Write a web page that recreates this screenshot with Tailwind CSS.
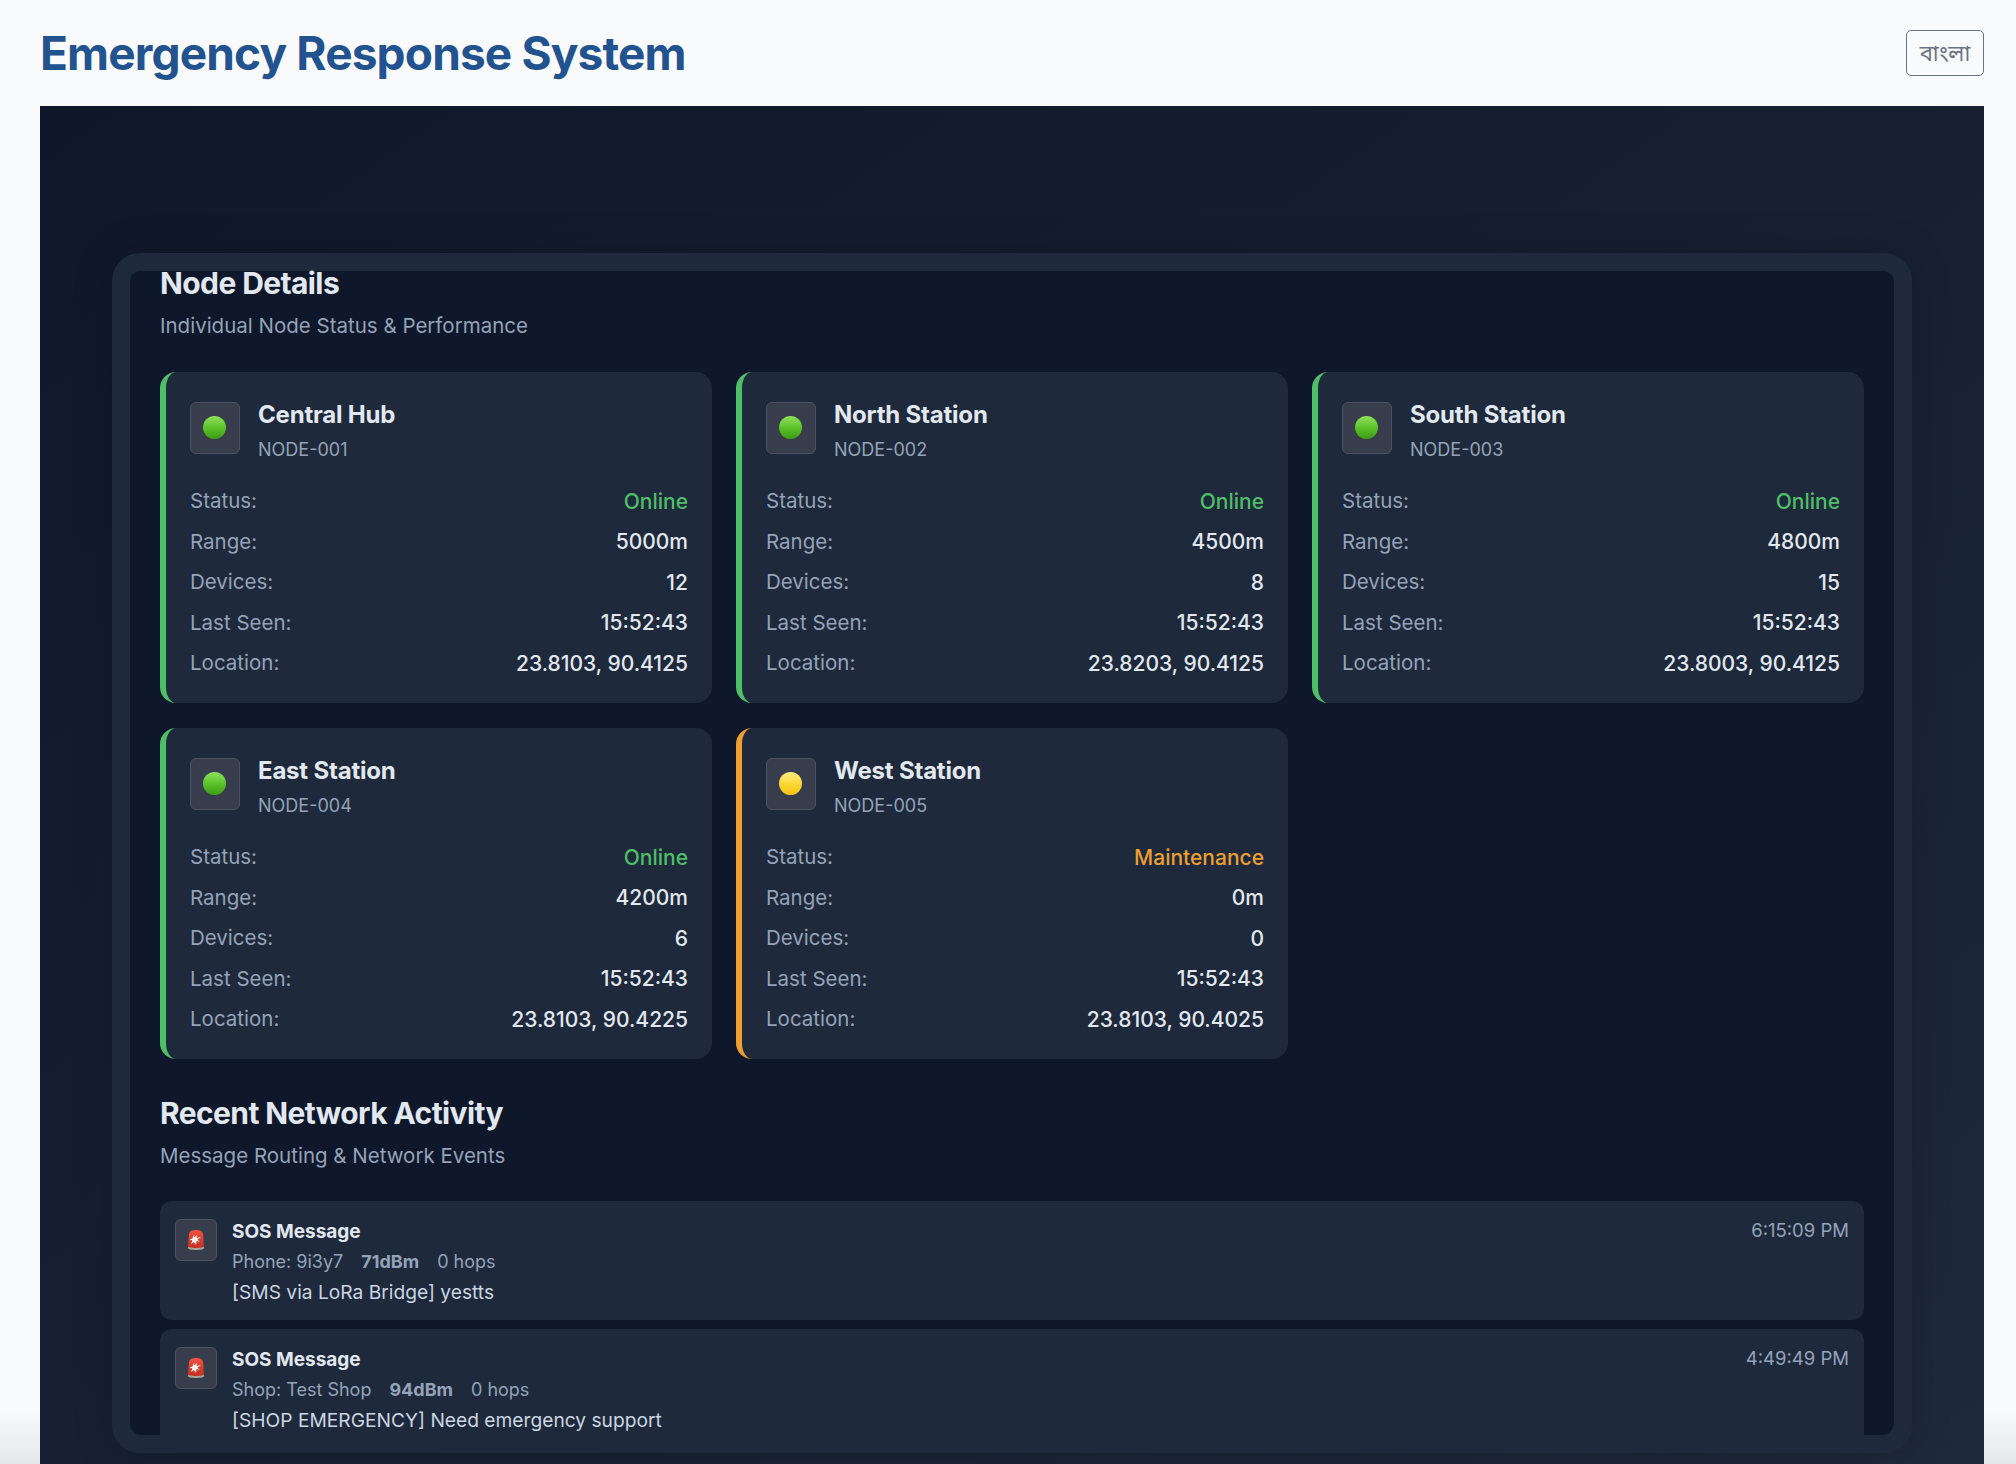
<!doctype html>
<html lang="en">
    <head>
        <meta charset="UTF-8" />
        <meta name="viewport" content="width=device-width, initial-scale=1.0" />
        <title>Emergency Response System</title>
        <script src="https://cdn.jsdelivr.net/npm/@tailwindcss/browser@4"></script>
    </head>
    <body class="relative h-[1464px] overflow-hidden bg-[#f8fafc] font-['Inter','Noto_Sans','Noto_Sans_Bengali',sans-serif] antialiased">
        <!-- Faint shadow rising from the page bottom -->
        <div class="absolute inset-x-0 bottom-0 h-[55px] bg-gradient-to-t from-[#e6e7e9] to-transparent"></div>

        <!-- Header -->
        <header class="relative flex h-[106px] items-center justify-between pr-8 pl-10">
            <h1 class="text-[46px] leading-none font-bold tracking-[-0.85px] text-[#23538f]">Emergency Response System</h1>
            <button class="h-[46px] w-[78px] rounded-[5px] border border-[#6b7280] text-[22px] text-[#6b7280]">বাংলা</button>
        </header>

        <!-- Dark panel -->
        <main class="relative mr-8 ml-10 h-[1358px] overflow-hidden bg-gradient-to-br from-[#0f172a] to-[#1e293b] px-[72px] pt-[147px]">
            <div class="h-[1200px] rounded-[28px] border-[18px] border-[#1e293b] shadow-[0_0_40px_rgba(0,0,0,0.18)]">
                <div class="h-full rounded-[12px] bg-[#0f172a] px-[30px] [clip-path:inset(-10px_0_0_0_round_12px)]">
                    <h2 class="text-[30px] leading-[24px] font-bold tracking-[-0.6px] text-[#e2e8f0]">Node Details</h2>
                    <p class="mt-[16px] text-[20.5px] leading-[30px] text-[#94a3b8]">Individual Node Status &amp; Performance</p>

                    <div id="node-grid" class="mt-[31px] grid grid-cols-3 gap-x-6 gap-y-[25px]"></div>

                    <h2 class="mt-[36px] text-[30px] leading-[36px] font-bold tracking-[-0.6px] text-[#e2e8f0]">Recent Network Activity</h2>
                    <p class="mt-[10px] text-[20.5px] leading-[30px] text-[#94a3b8]">Message Routing &amp; Network Events</p>

                    <div id="activity-list" class="mt-[30px] flex flex-col gap-[9px]"></div>
                </div>
            </div>
        </main>

        <script>
            const nodes = [
                { name: "Central Hub", id: "NODE-001", range: "5000m", devices: 12, loc: "23.8103, 90.4125" },
                { name: "North Station", id: "NODE-002", range: "4500m", devices: 8, loc: "23.8203, 90.4125" },
                { name: "South Station", id: "NODE-003", range: "4800m", devices: 15, loc: "23.8003, 90.4125" },
                { name: "East Station", id: "NODE-004", range: "4200m", devices: 6, loc: "23.8103, 90.4225" },
                { name: "West Station", id: "NODE-005", range: "0m", devices: 0, loc: "23.8103, 90.4025", maintenance: true },
            ];

            const row = (label, value, valueClass = "text-[#e2e8f0]") => `
                <div class="flex h-[40.6px] items-center justify-between">
                    <span class="text-[20.5px] text-[#94a3b8]">${label}</span>
                    <span class="text-[21px] font-medium ${valueClass}">${value}</span>
                </div>`;

            document.getElementById("node-grid").innerHTML = nodes
                .map((n) => {
                    const border = n.maintenance ? "border-[#ed9f32]" : "border-[#4fbf67]";
                    const dot = n.maintenance
                        ? "bg-gradient-to-b from-[#ffeb80] via-[#fdd835] to-[#f5c211]"
                        : "bg-gradient-to-b from-[#8fe05a] via-[#5cc42a] to-[#3e9a14]";
                    const statusClass = n.maintenance ? "text-[#ed9f32]" : "text-[#4fbf67]";
                    return `
                    <div class="h-[331px] rounded-[16px] border-l-[6px] ${border} bg-[#1e293b] pt-[30px] pr-6 pl-6">
                        <div class="flex gap-[18px]">
                            <div class="flex h-[52px] w-[50px] items-center justify-center rounded-[6px] border border-[#4c5361] bg-[#373d4d]">
                                <span class="mr-[1px] mb-[2px] h-[23px] w-[23px] rounded-full ${dot}"></span>
                            </div>
                            <div class="-mt-[2px]">
                                <h3 class="text-[24px] leading-[30px] font-bold tracking-[-0.2px] text-[#e2e8f0]">${n.name}</h3>
                                <p class="mt-[8px] text-[18px] leading-[24px] text-[#94a3b8]">${n.id}</p>
                            </div>
                        </div>
                        <div class="mt-[19px]">
                            ${row("Status:", n.maintenance ? "Maintenance" : "Online", statusClass)}
                            ${row("Range:", n.range)}
                            ${row("Devices:", n.devices)}
                            ${row("Last Seen:", "15:52:43")}
                            ${row("Location:", n.loc)}
                        </div>
                    </div>`;
                })
                .join("");

            const siren = `
                <svg width="16" height="20" viewBox="0 0 16 20">
                    <defs>
                        <linearGradient id="dome" x1="0" y1="0" x2="0" y2="1">
                            <stop offset="0" stop-color="#ee5442" />
                            <stop offset="1" stop-color="#c22f20" />
                        </linearGradient>
                    </defs>
                    <path d="M0 16.500v1.500c0 1.200 3.500 2 8 2s8-.8 8-2v-1.500z" fill="#a8a49c" />
                    <path d="M0 16 1 4C1.200 1.500 4 0 8 0s6.800 1.500 7 4l1 12c0 1.200-3.500 2-8 2s-8-.8-8-2z" fill="url(#dome)" />
                    <path d="M5.500 5 6.500 7.500 9 4.500 8.500 8 13 7 9.500 9.500 11.500 12 8.500 11 8 15 6 12 3 14 4.500 10.500 1.500 9.500 4.500 8.500z" fill="#fff" opacity="0.95" />
                </svg>`;

            const activity = [
                { from: "Phone: 9i3y7", signal: "71dBm", text: "[SMS via LoRa Bridge] yestts", time: "6:15:09 PM" },
                { from: "Shop: Test Shop", signal: "94dBm", text: "[SHOP EMERGENCY] Need emergency support", time: "4:49:49 PM" },
            ];

            document.getElementById("activity-list").innerHTML = activity
                .map(
                    (a) => `
                    <div class="flex h-[119px] shrink-0 gap-[15px] rounded-[12px] bg-[#1e293b] pt-[18px] pr-[15px] pl-[15px]">
                        <div class="flex h-[42px] w-[42px] shrink-0 items-center justify-center rounded-[6px] border border-[#4c5361] bg-[#373d4d]">${siren}</div>
                        <div class="flex-1 pt-[1px]">
                            <h4 class="text-[19px] leading-[24px] font-bold text-[#e2e8f0]">SOS Message</h4>
                            <div class="mt-[6px] flex gap-[18px] text-[18px] leading-[24px] text-[#94a3b8]">
                                <span>${a.from}</span><span class="font-bold">${a.signal}</span><span>0 hops</span>
                            </div>
                            <p class="mt-[6px] text-[19.2px] leading-[24px] text-[#cbd5e1]">${a.text}</p>
                        </div>
                        <span class="-mt-[1px] text-[18.5px] leading-[24px] text-[#94a3b8]">${a.time}</span>
                    </div>`,
                )
                .join("");
        </script>
    </body>
</html>
